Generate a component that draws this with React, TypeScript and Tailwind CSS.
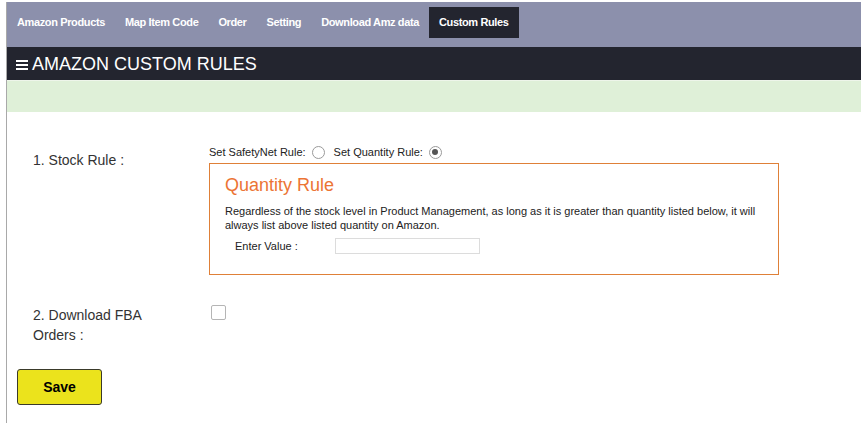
import { useState } from 'react'

const tabs = ['Amazon Products', 'Map Item Code', 'Order', 'Setting', 'Download Amz data', 'Custom Rules']

function Radio({ checked, onClick }: { checked: boolean; onClick: () => void }) {
  return (
    <button
      onClick={onClick}
      className="w-[13px] h-[13px] rounded-full border border-[#9a9a9a] bg-white flex items-center justify-center"
      aria-pressed={checked}
    >
      {checked && <span className="w-[6px] h-[6px] rounded-full bg-[#555]" />}
    </button>
  )
}

export default function App() {
  const [rule, setRule] = useState<'safety' | 'quantity'>('quantity')
  const [fba, setFba] = useState(false)

  return (
    <div className="min-h-screen bg-white pt-[2px] pl-[6px] font-['Liberation_Sans',Arial,sans-serif]">
      <div className="border-l border-[#a9a9a9] min-h-[421px]">
        <nav className="bg-[#8c90ac] h-[45px] pt-[5px] flex items-start">
          {tabs.map(t => (
            <a
              key={t}
              href="#"
              className={
                'h-[31px] px-[10px] flex items-center text-[11px] font-bold text-white tracking-[-0.37px] ' +
                (t === 'Custom Rules' ? 'bg-[#23252f]' : '')
              }
            >
              {t}
            </a>
          ))}
        </nav>

        <header className="bg-[#23252f] h-[33px] pl-[9px] flex items-center text-white text-[18px]">
          <span className="mr-[4px] flex flex-col gap-[2px] w-[12px] mt-[2px]">
            <span className="h-[2px] bg-white" />
            <span className="h-[2px] bg-white" />
            <span className="h-[2px] bg-white" />
          </span>
          <span className="mt-[1px]">AMAZON CUSTOM RULES</span>
        </header>
        <div className="h-[32px] bg-[#dff0d8] border-t border-[#eef5ea]" />

        <div className="pt-[33px] text-[#222]">
          <div className="flex">
            <div className="w-[202px] shrink-0 pl-[26px] pt-[5px] text-[14px] leading-[20px] text-[#333]">
              1. Stock Rule :
            </div>
            <div className="flex-1">
              <div className="flex items-center h-[14px] text-[11px] gap-[6px]">
                <span>Set SafetyNet Rule:</span>
                <Radio checked={rule === 'safety'} onClick={() => setRule('safety')} />
                <span className="ml-[3px]">Set Quantity Rule:</span>
                <Radio checked={rule === 'quantity'} onClick={() => setRule('quantity')} />
              </div>
              <div className="mt-[4px] w-[570px] h-[112px] border border-[#df8038] px-[15px] pt-[11px]">
                <h2 className="text-[18px] leading-[20px] text-[#ec7434]">Quantity Rule</h2>
                <p className="mt-[9px] text-[11px] leading-[14px] text-[#222]">
                  Regardless of the stock level in Product Management, as long as it is greater than quantity listed below, it will
                  always list above listed quantity on Amazon.
                </p>
                <div className="mt-[6px] flex items-center text-[11px]">
                  <span className="pl-[10px] w-[110px]">Enter Value :</span>
                  <input className="w-[145px] h-[16px] border border-[#dcdcdc] outline-none px-1 text-[11px]" />
                </div>
              </div>
            </div>
          </div>

          <div className="flex mt-[30px]">
            <div className="w-[202px] shrink-0 pl-[26px] pr-[56px] text-[14px] leading-[20px] text-[#333]">
              2. Download FBA Orders :
            </div>
            <div className="pl-[2px]">
              <button
                onClick={() => setFba(!fba)}
                className="w-[15px] h-[15px] border border-[#b5b5b5] rounded-[2px] bg-white flex items-center justify-center text-[11px]"
              >
                {fba ? '✓' : ''}
              </button>
            </div>
          </div>

          <button className="ml-[10px] mt-[24px] w-[85px] h-[36px] bg-[#ebe31c] border border-[#3a3a2a] rounded-[3px] text-[14px] font-bold text-black">
            Save
          </button>
        </div>
      </div>
    </div>
  )
}
